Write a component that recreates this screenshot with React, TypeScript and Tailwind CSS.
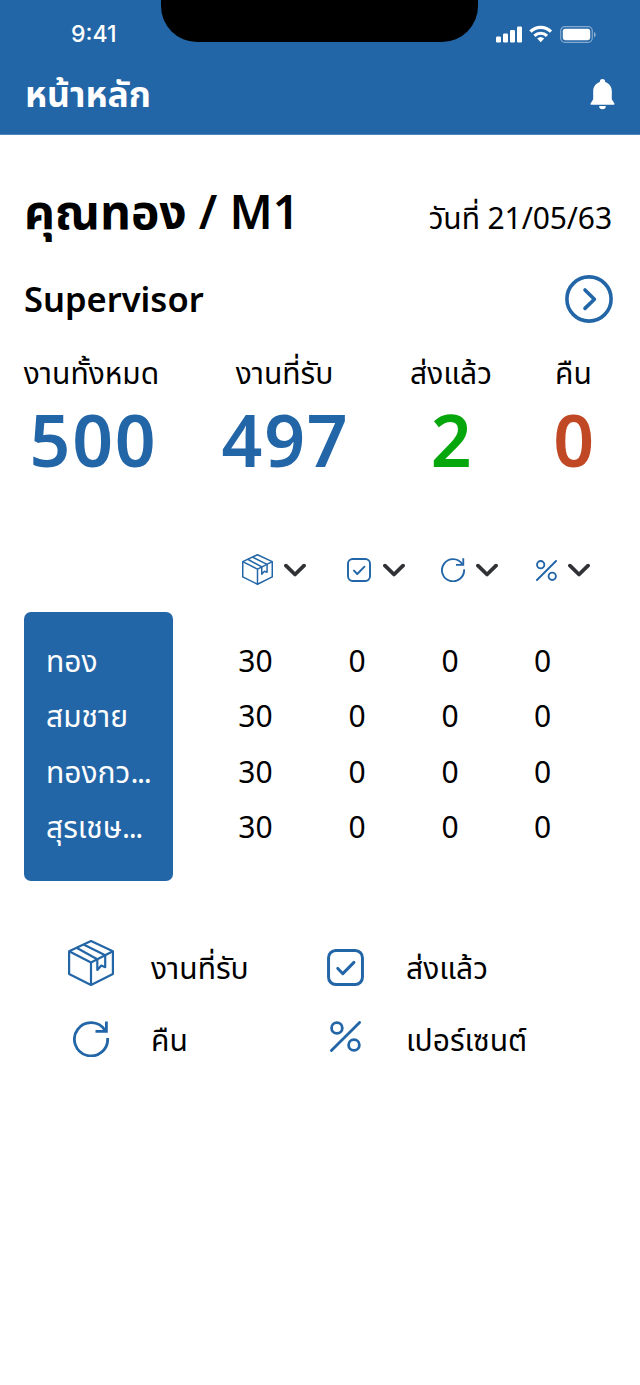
import { ReactNode } from "react";
import clsx from "clsx";

const THAI = "font-['Noto_Sans','Noto_Sans_Thai',sans-serif]";

interface IconProps {
    className?: string;
    strokeWidth?: number;
}

function BoxIcon({ className, strokeWidth = 2.2 }: IconProps) {
    return (
        <svg className={className} viewBox="0 0 46 46" fill="none" stroke="currentColor" strokeWidth={strokeWidth} strokeLinejoin="round">
            <path d="M23 1.1 44.9 11.3V34L23 44.9 1.1 34V11.3Z" />
            <path d="M1.1 11.3 23 22.5 44.9 11.3M23 22.5V45" />
            <path d="M8.5 7.8 29.3 19.2V30l4-4.4 3.9 1.6V15.3L15.6 4.6" />
        </svg>
    );
}

function CheckIcon({ className }: IconProps) {
    return (
        <svg className={className} viewBox="0 0 36 36" fill="none" stroke="currentColor" strokeWidth="2.9" strokeLinecap="round" strokeLinejoin="round">
            <rect x="1.5" y="1.5" width="33" height="33" rx="7" />
            <path d="m10.5 18.9 4.9 5.1L26.2 13" />
        </svg>
    );
}

function ReturnIcon({ className, strokeWidth = 2.8 }: IconProps) {
    return (
        <svg className={className} viewBox="0 0 36 36" fill="none" stroke="currentColor" strokeWidth={strokeWidth}>
            <path d="M34.6 17A16.6 16.6 0 1 1 32 9.3" />
            <path d="M33.4.5V10.3H22.5" />
        </svg>
    );
}

function PercentIcon({ className, strokeWidth = 2.7 }: IconProps) {
    return (
        <svg className={className} viewBox="0 0 30 30" fill="none" stroke="currentColor" strokeWidth={strokeWidth} strokeLinecap="round">
            <circle cx="6.7" cy="6.7" r="5.2" />
            <circle cx="23.2" cy="23.3" r="5.2" />
            <path d="M1.4 28.6 28.6 1.4" />
        </svg>
    );
}

function ChevronDown() {
    return (
        <svg className="h-[14px] w-[22px]" viewBox="0 0 22 14" fill="none" stroke="#303236" strokeWidth="3.8" strokeLinecap="round" strokeLinejoin="round">
            <path d="m2 2.7 9 8.8 9-8.8" />
        </svg>
    );
}

function StatusIcons() {
    return (
        <svg className="mt-[25px] mr-[44px] h-[19px] w-[100px]" viewBox="0 0 100 19" fill="white">
            <rect x="0" y="11.5" width="5" height="6" rx="1.2" />
            <rect x="7" y="8.5" width="5" height="9" rx="1.2" />
            <rect x="14" y="5" width="5" height="12.5" rx="1.2" />
            <rect x="21" y="1.5" width="5" height="16" rx="1.2" />
            <g fill="none" stroke="white" strokeWidth="3.2">
                <path d="M34.4 6.6a14.5 14.5 0 0 1 20.6 0" />
                <path d="M38.4 10.8a9 9 0 0 1 12.6 0" />
            </g>
            <path d="M41.2 13.5a5.2 5.2 0 0 1 7 0l-3.5 3.7Z" />
            <rect x="64.7" y="1.7" width="31.6" height="15.6" rx="4.2" fill="none" stroke="white" strokeOpacity=".45" strokeWidth="1.2" />
            <rect x="66.8" y="3.8" width="27.4" height="11.4" rx="2.4" />
            <path d="M98 7v5.4a3 3 0 0 0 0-5.4Z" opacity=".5" />
        </svg>
    );
}

function BellIcon() {
    return (
        <svg className="h-[31px] w-[25px]" viewBox="0 0 25 31" fill="white">
            <path d="M12.5 0a2.5 2.5 0 0 0-2.6 2.9C5.7 4.2 3.2 7.8 3.2 12v8.2L.6 24.4c-.4.7 0 1.3.7 1.3h22.4c.7 0 1.1-.6.7-1.3l-2.6-4.2V12c0-4.2-2.5-7.8-6.7-9.1A2.5 2.5 0 0 0 12.5 0Z" />
            <path d="M9.2 27h6.6a3.3 3.3 0 0 1-6.6 0Z" />
        </svg>
    );
}

const stats = [
    { label: "งานทั้งหมด", value: "500", cell: "w-[151px]", color: "pl-[4px] text-[#2366a7]" },
    { label: "งานที่รับ", value: "497", cell: "w-[235px]", color: "pl-[2px] text-[#2366a7]" },
    { label: "ส่งแล้ว", value: "2", cell: "w-[98px]", color: "pl-[2px] text-[#06a70c]" },
    { label: "คืน", value: "0", cell: "w-[147px]", color: "pl-[2px] text-[#c14824]" },
];

const rows = [
    { name: "ทอง", values: [30, 0, 0, 0] },
    { name: "สมชาย", values: [30, 0, 0, 0] },
    { name: "ทองกว", cut: true, values: [30, 0, 0, 0] },
    { name: "สุรเชษ", cut: true, values: [30, 0, 0, 0] },
];

function LegendItem({ icon, label, iconCell }: { icon: ReactNode; label: string; iconCell: string }) {
    return (
        <div className="flex h-[72px] items-center">
            <div className={clsx("flex shrink-0 items-center", iconCell)}>{icon}</div>
            <span className="whitespace-nowrap text-[30px] leading-[40px]">{label}</span>
        </div>
    );
}

export default function App() {
    return (
        <div className={clsx("h-[1385px] w-[640px] overflow-hidden bg-white text-black", THAI)}>
            {/* Header */}
            <header className="h-[135px] border-b border-[#4c86bb] bg-[#2366a7] text-white">
                <div className="flex h-[62px] items-start justify-between">
                    <div className="w-[161px] pt-[20px] pl-[71px] font-['Inter',sans-serif] text-[23px] leading-[28px] font-medium">9:41</div>
                    <div className="h-[42px] w-[317px] rounded-b-[36px] bg-black" />
                    <div className="flex w-[162px] justify-start pl-[18px]">
                        <StatusIcons />
                    </div>
                </div>
                <div className="flex h-[64px] items-center justify-between pr-[25px] pl-[25px]">
                    <h1 className="-mt-[3px] text-[35.5px] leading-[50px] font-bold">หน้าหลัก</h1>
                    <BellIcon />
                </div>
            </header>

            {/* Name and date */}
            <div className="mt-[45px] flex h-[68px] items-center justify-between pr-[28px] pl-6">
                <h2 className="-mt-[6px] flex items-baseline text-[48px] leading-[68px] font-bold whitespace-pre">
                    คุณทอง<span className="text-[46.5px] font-semibold"> / M1</span>
                </h2>
                <span className="mt-[8px] text-[30px] leading-[40px] tracking-[-0.1px] whitespace-nowrap">วันที่ 21/05/63</span>
            </div>

            <div className="mt-[27px] flex h-[48px] items-center justify-between pr-[27px] pl-6">
                <h3 className="text-[34.5px] leading-[48px] font-semibold">Supervisor</h3>
                <button type="button" className="text-[#2366a7]">
                    <svg className="h-[48px] w-[48px]" viewBox="0 0 48 48" fill="none" stroke="currentColor" strokeWidth="3.6" strokeLinecap="round" strokeLinejoin="round">
                        <circle cx="24" cy="24" r="22.1" />
                        <path d="m20 15 9.4 9.2L20 33.4" />
                    </svg>
                </button>
            </div>

            {/* Totals */}
            <div className="mt-[29px] flex pl-4">
                {stats.map(stat => (
                    <div key={stat.label} className={clsx("flex shrink-0 flex-col items-center", stat.cell)}>
                        <span className="text-[30px] leading-[42px] whitespace-nowrap">{stat.label}</span>
                        <span className={clsx("mt-[4px] text-[71.5px] leading-[84px] font-semibold tracking-[1.8px]", stat.color)}>{stat.value}</span>
                    </div>
                ))}
            </div>

            {/* Column icons */}
            <div className="mt-[72px] flex h-[32px] items-center pl-[241.5px] text-[#2366a7]">
                <div className="flex w-[105px] items-center gap-[11px]">
                    <BoxIcon className="-mt-px h-[31px] w-[31px]" />
                    <ChevronDown />
                </div>
                <div className="flex w-[94px] items-center gap-[12px]">
                    <CheckIcon className="h-[24px] w-[24px]" />
                    <ChevronDown />
                </div>
                <div className="flex w-[95.5px] items-center gap-[11px]">
                    <ReturnIcon className="h-[24px] w-[24px]" />
                    <ChevronDown />
                </div>
                <div className="flex items-center gap-[11px]">
                    <PercentIcon className="h-[21px] w-[21px]" />
                    <ChevronDown />
                </div>
            </div>

            {/* Team table */}
            <div className="mt-[26px] flex pl-6">
                <div className="h-[269px] w-[149px] rounded-[7px] bg-[#2366a7] pt-[21px] pl-[22px] text-white">
                    {rows.map(row => (
                        <div key={row.name} className="h-[55.4px] text-[30px] leading-[55px] whitespace-nowrap">
                            {row.name}
                            {row.cut && <span className="tracking-[-1.4px]">...</span>}
                        </div>
                    ))}
                </div>
                <div className="pt-[21px] pl-[36px]">
                    {rows.map(row => (
                        <div key={row.name} className="grid h-[55.4px] grid-cols-[93px_110px_76px_109px] text-center text-[30px] leading-[55px]">
                            {row.values.map((value, i) => (
                                <span key={i}>{value}</span>
                            ))}
                        </div>
                    ))}
                </div>
            </div>

            {/* Legend */}
            <div className="mt-[51px] grid grid-cols-[259px_1fr] pl-[68px]">
                <LegendItem iconCell="w-[83px] pb-[11px]" icon={<BoxIcon className="h-[46px] w-[46px] text-[#2366a7]" />} label="งานที่รับ" />
                <LegendItem iconCell="w-[79px] pb-px" icon={<CheckIcon className="h-[37px] w-[37px] text-[#2366a7]" />} label="ส่งแล้ว" />
                <LegendItem iconCell="w-[83px] pb-[2px] pl-[5px]" icon={<ReturnIcon className="h-[36px] w-[36px] text-[#2366a7]" />} label="คืน" />
                <LegendItem iconCell="w-[79px] pb-[7px] pl-[3px]" icon={<PercentIcon className="h-[31px] w-[31px] text-[#2366a7]" />} label="เปอร์เซนต์" />
            </div>
        </div>
    );
}
